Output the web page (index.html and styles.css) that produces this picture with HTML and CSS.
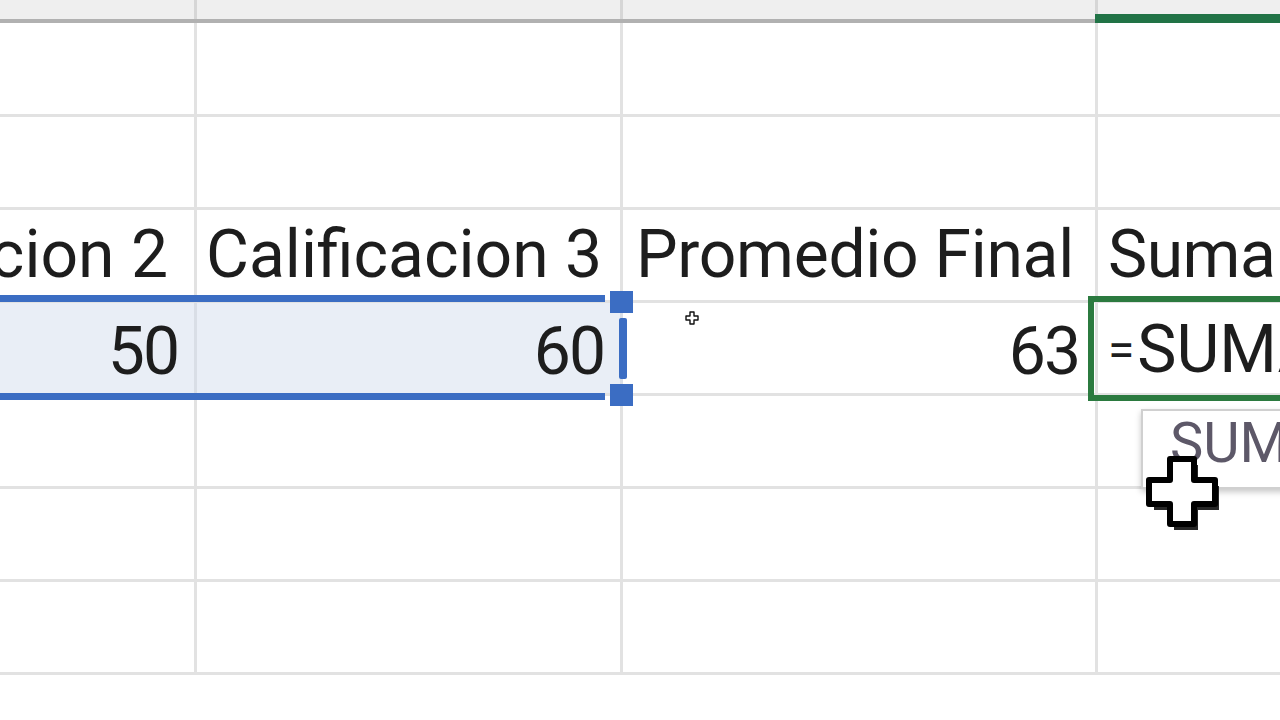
FILE: index.html
```html
<!DOCTYPE html>
<html lang="es">
<head>
<meta charset="utf-8">
<title>Hoja de cálculo</title>
<link rel="stylesheet" href="styles.css">
</head>
<body>
<div class="sheet">
  <div class="colhead">
    <div class="hcell"></div>
    <div class="hcell"></div>
    <div class="hcell"></div>
    <div class="hcell active"></div>
  </div>
  <div class="grid">
    <div class="row first"><div class="cell"></div><div class="cell"></div><div class="cell"></div><div class="cell"></div></div>
    <div class="row"><div class="cell"></div><div class="cell"></div><div class="cell"></div><div class="cell"></div></div>
    <div class="row head">
      <div class="cell right t-a">cion 2</div>
      <div class="cell t-b">Calificacion 3</div>
      <div class="cell t-c">Promedio Final</div>
      <div class="cell t-d">Suma</div>
    </div>
    <div class="row data">
      <div class="cell right sel">50</div>
      <div class="cell right sel">60</div>
      <div class="cell right">63</div>
      <div class="cell formula"><span class="eq">=</span>SUMA</div>
    </div>
    <div class="row"><div class="cell"></div><div class="cell"></div><div class="cell"></div><div class="cell"></div></div>
    <div class="row"><div class="cell"></div><div class="cell"></div><div class="cell"></div><div class="cell"></div></div>
    <div class="row"><div class="cell"></div><div class="cell"></div><div class="cell"></div><div class="cell"></div></div>
  </div>

  <div class="sel-top"></div>
  <div class="sel-bottom"></div>
  <div class="sel-right"></div>
  <div class="handle h-top"></div>
  <div class="handle h-bottom"></div>

  <div class="active-box"></div>

  <div class="tip">SUMA</div>

  <svg class="cursor-small" width="14" height="14" viewBox="0 0 14 14">
    <path d="M5 1h4v4h4v4H9v4H5V9H1V5h4z" fill="#fff" stroke="#111" stroke-width="1.4" stroke-linejoin="round"/>
  </svg>
  <svg class="cursor-big" width="80" height="80" viewBox="0 0 80 80">
    <path d="M31 11h24v21h21v24H55v20H31V56H11V32h20z" fill="#000" opacity="0.85"/>
    <path d="M27 5h24v21h21v24H51v20H27V50H6V26h21z" fill="#fff" stroke="#000" stroke-width="6" stroke-linejoin="round"/>
  </svg>
</div>
</body>
</html>
```
FILE: styles.css
```css
html, body {
  margin: 0;
  padding: 0;
  background: #ffffff;
}
body {
  width: 1280px;
  height: 720px;
  overflow: hidden;
  font-family: Roboto, "Liberation Sans", sans-serif;
  color: #1d1d1d;
}
.sheet {
  position: relative;
  width: 1280px;
  height: 720px;
  overflow: hidden;
}
.colhead {
  display: grid;
  grid-template-columns: 197px 426px 475px 1fr;
  height: 19px;
  background: #efefef;
  border-bottom: 4px solid #b1b1b1;
}
.hcell {
  border-right: 3px solid #d6d6d6;
  position: relative;
}
.hcell.active {
  border-right: none;
}
.hcell.active::after {
  content: "";
  position: absolute;
  left: -3px;
  right: 0;
  bottom: -4px;
  height: 9px;
  background: #217346;
}
.grid {
  display: flex;
  flex-direction: column;
}
.row {
  display: grid;
  grid-template-columns: 197px 426px 475px 1fr;
  height: 93px;
}
.row.first {
  height: 94px;
}
.cell {
  border-right: 3px solid #e2e2e2;
  border-bottom: 3px solid #e2e2e2;
  overflow: hidden;
  white-space: nowrap;
  display: flex;
  align-items: flex-end;
  font-size: 66px;
  line-height: 1;
  padding: 0 16px 14px 12px;
}
.cell:last-child {
  border-right: none;
}
.right {
  justify-content: flex-end;
}
.head .cell {
  padding-bottom: 12px;
}
.t-a {
  padding-right: 26px;
}
.t-b {
  padding-left: 9px;
}
.t-c {
  padding-left: 13px;
  letter-spacing: -0.3px;
}
.t-d {
  padding-left: 10px;
  letter-spacing: -0.5px;
}
.data .cell {
  padding-bottom: 8px;
}
.data .right {
  letter-spacing: -2px;
}
.sel {
  background: #e9eef6;
  border-right-color: #d9dee6;
}
.formula {
  padding-left: 10px;
  align-items: center;
  padding-top: 4px;
  padding-bottom: 0;
}
.data .formula {
  padding-bottom: 0;
}
.eq {
  font-size: 48px;
  margin-right: 3px;
}
.sel-top, .sel-bottom {
  position: absolute;
  left: 0;
  width: 605px;
  height: 7px;
  background: #3b6dc3;
}
.sel-top {
  top: 295px;
}
.sel-bottom {
  top: 393px;
}
.sel-right {
  position: absolute;
  left: 619px;
  top: 318px;
  width: 8px;
  height: 61px;
  border-radius: 2px;
  background: #3b6dc3;
}
.handle {
  position: absolute;
  left: 610px;
  width: 23px;
  height: 22px;
  background: #3b6dc3;
}
.h-top {
  top: 291px;
}
.h-bottom {
  top: 384px;
}
.active-box {
  position: absolute;
  left: 1088px;
  top: 296px;
  width: 220px;
  height: 93px;
  border: 6px solid #2b7a3f;
}
.tip {
  position: absolute;
  left: 1141px;
  top: 409px;
  width: 200px;
  height: 80px;
  box-sizing: border-box;
  background: #ffffff;
  border: 2px solid #d0d0d0;
  box-shadow: 0 3px 6px rgba(0, 0, 0, 0.22);
  font-size: 56px;
  line-height: 1;
  color: #5d5868;
  padding: 4px 0 0 27px;
}
.cursor-small {
  position: absolute;
  left: 685px;
  top: 311px;
}
.cursor-big {
  position: absolute;
  left: 1143px;
  top: 454px;
}
```
